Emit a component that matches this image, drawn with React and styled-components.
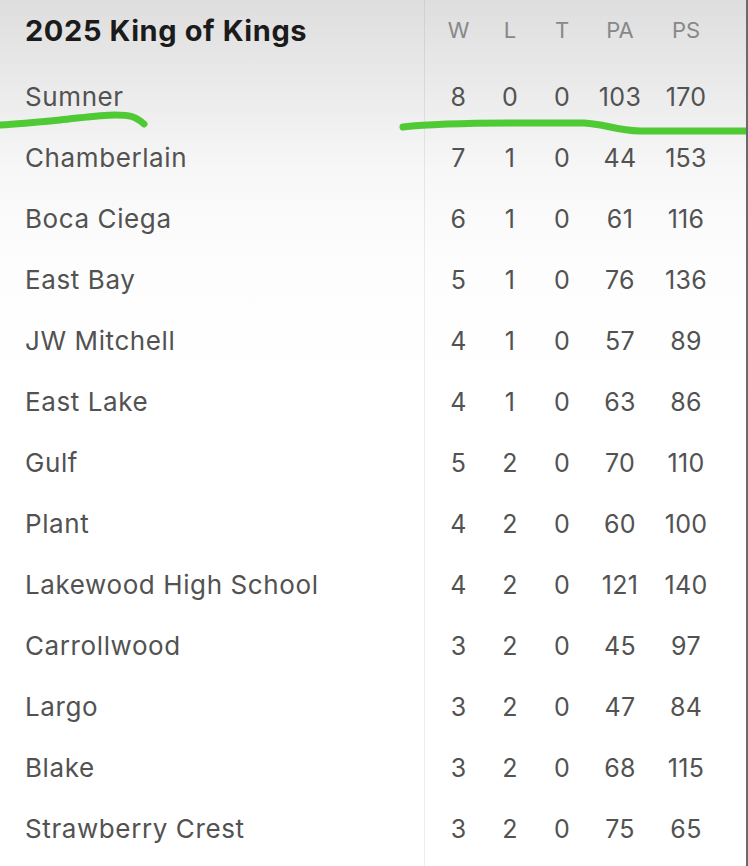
import React from "react";
import styled, { createGlobalStyle } from "styled-components";

const Global = createGlobalStyle`
  html, body { margin: 0; padding: 0; }
  body {
    background: #fff;
    font-family: "Inter", "Liberation Sans", sans-serif;
  }
`;

const Page = styled.div`
  position: relative;
  width: 748px;
  height: 866px;
  overflow: hidden;
  box-sizing: border-box;
  border-right: 2px solid #6a6a6a;
  background: linear-gradient(180deg, #dedede 0px, #ebebeb 90px, #f7f7f7 170px, #fdfdfd 260px, #ffffff 400px);
`;

const Divider = styled.div`
  position: absolute;
  top: 0;
  bottom: 0;
  left: 424px;
  width: 1px;
  background: rgba(0, 0, 0, 0.07);
`;

const Row = styled.div`
  display: grid;
  grid-template-columns: 433px 51px 52px 52px 64px 68px;
  align-items: center;
  height: ${(p) => (p.$header ? "60px" : "61px")};
  margin-bottom: ${(p) => (p.$header ? "6px" : "0")};
`;

const Title = styled.div`
  padding-left: 25px;
  font-size: 29px;
  font-weight: 700;
  color: #1b1b1b;
  letter-spacing: 0.6px;
`;

const HeadCell = styled.div`
  text-align: center;
  font-size: 22px;
  color: #888888;
`;

const Team = styled.div`
  padding-left: 25px;
  font-size: 26px;
  color: #525252;
  letter-spacing: 0.6px;
`;

const Cell = styled.div`
  text-align: center;
  font-size: 25px;
  color: #525252;
  letter-spacing: 0.3px;
`;

const Marker = styled.svg`
  position: absolute;
  left: 0;
  top: 0;
  pointer-events: none;
`;

const teams = [
  ["Sumner", 8, 0, 0, 103, 170],
  ["Chamberlain", 7, 1, 0, 44, 153],
  ["Boca Ciega", 6, 1, 0, 61, 116],
  ["East Bay", 5, 1, 0, 76, 136],
  ["JW Mitchell", 4, 1, 0, 57, 89],
  ["East Lake", 4, 1, 0, 63, 86],
  ["Gulf", 5, 2, 0, 70, 110],
  ["Plant", 4, 2, 0, 60, 100],
  ["Lakewood High School", 4, 2, 0, 121, 140],
  ["Carrollwood", 3, 2, 0, 45, 97],
  ["Largo", 3, 2, 0, 47, 84],
  ["Blake", 3, 2, 0, 68, 115],
  ["Strawberry Crest", 3, 2, 0, 75, 65],
];

export default function App() {
  return (
    <>
      <Global />
      <Page>
        <Divider />
        <Row $header>
          <Title>2025 King of Kings</Title>
          {["W", "L", "T", "PA", "PS"].map((h) => (
            <HeadCell key={h}>{h}</HeadCell>
          ))}
        </Row>
        {teams.map(([name, ...stats]) => (
          <Row key={name}>
            <Team>{name}</Team>
            {stats.map((s, i) => (
              <Cell key={i}>{s}</Cell>
            ))}
          </Row>
        ))}
        <Marker width="748" height="866" viewBox="0 0 748 866">
          <path
            d="M0 125 C 20 124, 40 122, 60 120 S 100 115, 115 115 S 135 116, 144 124"
            fill="none"
            stroke="#4fca34"
            strokeWidth="7"
            strokeLinecap="round"
          />
          <path
            d="M403 127 C 430 124, 470 123, 520 123 L 584 123 C 605 124, 615 130, 640 131 L 748 131"
            fill="none"
            stroke="#4fca34"
            strokeWidth="7"
            strokeLinecap="round"
          />
        </Marker>
      </Page>
    </>
  );
}
